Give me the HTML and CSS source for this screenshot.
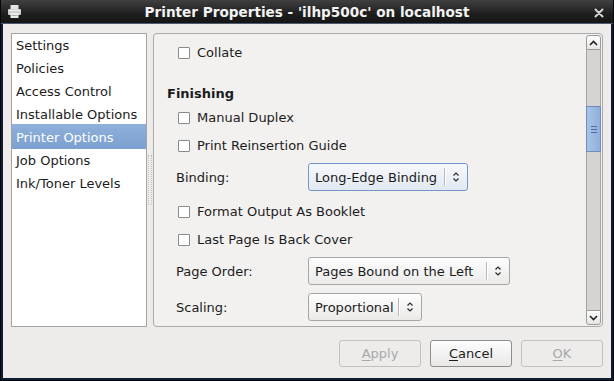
FILE: index.html
```html
<!DOCTYPE html>
<html lang="en">
<head>
    <meta charset="UTF-8">
    <title>Printer Properties - 'ilhp500c' on localhost</title>
    <link rel="stylesheet" href="styles.css">
</head>
<body>
    <div class="window">
        <div class="titlebar">
            <svg class="title-icon" width="15" height="15" viewBox="0 0 15 15">
                <rect x="3.5" y="1" width="8" height="4" fill="#e4e4e4"/>
                <rect x="1" y="5" width="13" height="6" rx="1" fill="#cfcfcf"/>
                <rect x="2" y="6" width="11" height="1" fill="#f0f0f0"/>
                <rect x="3.5" y="9" width="8" height="5" fill="#ececec"/>
                <rect x="4.5" y="11" width="6" height="1" fill="#aaa"/>
            </svg>
            <div class="title-text">Printer Properties - 'ilhp500c' on localhost</div>
            <svg class="title-close" width="10" height="10" viewBox="0 0 10 10">
                <path d="M1.5 1.5 L8.5 8.5 M8.5 1.5 L1.5 8.5" stroke="#d4d4d4" stroke-width="2" stroke-linecap="round"/>
            </svg>
        </div>

        <div class="client">
            <div class="main">
                <ul class="sidebar">
                    <li>Settings</li>
                    <li>Policies</li>
                    <li>Access Control</li>
                    <li>Installable Options</li>
                    <li class="selected">Printer Options</li>
                    <li>Job Options</li>
                    <li>Ink/Toner Levels</li>
                </ul>

                <div class="grip"></div>

                <div class="pane">
                    <div class="opts">
                        <label class="check-row"><span class="check"></span>Collate</label>

                        <div class="section-title">Finishing</div>
                        <label class="check-row"><span class="check"></span>Manual Duplex</label>
                        <label class="check-row"><span class="check"></span>Print Reinsertion Guide</label>
                        <div class="field-row">
                            <span class="field-label">Binding:</span>
                            <div class="combo combo-binding focused">
                                <span class="combo-text">Long-Edge Binding</span>
                                <span class="combo-sep"></span>
                                <svg class="combo-arrow" width="8" height="12" viewBox="0 0 8 12">
                                    <path d="M1.5 4.5 L4 2 L6.5 4.5 M1.5 7.5 L4 10 L6.5 7.5" fill="none" stroke="#2a2a2a" stroke-width="1.2"/>
                                </svg>
                            </div>
                        </div>
                        <label class="check-row"><span class="check"></span>Format Output As Booklet</label>
                        <label class="check-row"><span class="check"></span>Last Page Is Back Cover</label>
                        <div class="field-row">
                            <span class="field-label">Page Order:</span>
                            <div class="combo combo-order">
                                <span class="combo-text">Pages Bound on the Left</span>
                                <span class="combo-sep"></span>
                                <svg class="combo-arrow" width="8" height="12" viewBox="0 0 8 12">
                                    <path d="M1.5 4.5 L4 2 L6.5 4.5 M1.5 7.5 L4 10 L6.5 7.5" fill="none" stroke="#2a2a2a" stroke-width="1.2"/>
                                </svg>
                            </div>
                        </div>
                        <div class="field-row">
                            <span class="field-label">Scaling:</span>
                            <div class="combo combo-scaling">
                                <span class="combo-text">Proportional</span>
                                <span class="combo-sep"></span>
                                <svg class="combo-arrow" width="8" height="12" viewBox="0 0 8 12">
                                    <path d="M1.5 4.5 L4 2 L6.5 4.5 M1.5 7.5 L4 10 L6.5 7.5" fill="none" stroke="#2a2a2a" stroke-width="1.2"/>
                                </svg>
                            </div>
                        </div>
                    </div>

                    <div class="scrollbar">
                        <div class="scroll-btn scroll-up">
                            <svg width="9" height="6" viewBox="0 0 9 6">
                                <path d="M1 5 L4.5 1.5 L8 5" fill="none" stroke="#222" stroke-width="1.6"/>
                            </svg>
                        </div>
                        <div class="trough">
                            <div class="thumb">
                                <span></span><span></span><span></span>
                            </div>
                        </div>
                        <div class="scroll-btn scroll-down">
                            <svg width="9" height="6" viewBox="0 0 9 6">
                                <path d="M1 1 L4.5 4.5 L8 1" fill="none" stroke="#222" stroke-width="1.6"/>
                            </svg>
                        </div>
                    </div>
                </div>
            </div>

            <div class="buttons">
                <button class="btn" disabled><u>A</u>pply</button>
                <button class="btn"><u>C</u>ancel</button>
                <button class="btn" disabled><u>O</u>K</button>
            </div>
        </div>
    </div>
</body>
</html>
```

FILE: styles.css
```css
* {
    margin: 0;
    padding: 0;
    box-sizing: border-box;
    font-family: 'DejaVu Sans', 'Liberation Sans', sans-serif;
}

body {
    width: 614px;
    height: 381px;
    overflow: hidden;
    background: #000;
}

.window {
    width: 614px;
    height: 381px;
    display: flex;
    flex-direction: column;
    background: #0f1b30;
    border: 1px solid #05070c;
    border-top: none;
}

.titlebar {
    height: 24px;
    display: flex;
    align-items: center;
    padding: 0 9px 0 6px;
    background: linear-gradient(#404040, #1e1e1e 60%, #151515);
    border-bottom: 1px solid #4c5b72;
    flex-shrink: 0;
}

.title-icon {
    display: block;
}

.title-text {
    flex: 1;
    text-align: center;
    color: #f2f2f2;
    font-size: 13.6px;
    font-weight: bold;
    padding-right: 2px;
}

.title-close {
    display: block;
    margin-top: 2px;
}

.client {
    flex: 1;
    margin: 0 2px 2px 2px;
    background: #edeceb;
    padding: 9px 8px 0 8px;
    display: flex;
    flex-direction: column;
}

.main {
    height: 294px;
    display: flex;
    align-items: stretch;
}

/* left list */
.sidebar {
    list-style: none;
    width: 136px;
    background: #fff;
    border: 1px solid #a3a3a3;
}

.sidebar li {
    height: 23px;
    line-height: 23px;
    padding-left: 4px;
    font-size: 13px;
    color: #1c1c1c;
    white-space: nowrap;
}

.sidebar li.selected {
    height: 25px;
    line-height: 23px;
    margin-top: -2px;
    padding-top: 2px;
    background: linear-gradient(#8fb0dc, #7b9fcf);
    color: #fff;
}

.grip {
    align-self: center;
    width: 6px;
    height: 50px;
    border-left: 1px dotted #b9b8b6;
    border-right: 1px dotted #b9b8b6;
    transform: scaleX(0.6);
}

/* right scrolled pane */
.pane {
    flex: 1;
    display: flex;
    background: #f2f1f0;
    border: 1px solid #a9a9a9;
    border-radius: 4px;
}

.opts {
    flex: 1;
    display: flex;
    flex-direction: column;
    padding: 6px 0 0 13px;
    font-size: 13px;
    color: #1c1c1c;
}

.check-row {
    height: 24px;
    display: flex;
    align-items: center;
    gap: 7px;
    padding-left: 11px;
    padding-top: 1px;
}

.check {
    width: 12px;
    height: 12px;
    background: #fff;
    border: 1px solid #8a8a8a;
    border-radius: 1px;
}

.section-title {
    margin-top: 20px;
    height: 20px;
    line-height: 20px;
    font-weight: bold;
}

.field-row {
    height: 28px;
    display: flex;
    align-items: center;
    padding-left: 9px;
}

.section-title + .check-row {
    margin-top: 1px;
}

.check-row + .check-row {
    margin-top: 4px;
}

.check-row + .field-row {
    margin-top: 6px;
}

.field-row + .check-row,
.field-row + .field-row {
    margin-top: 8px;
}

.field-label {
    width: 132px;
}

.combo {
    height: 28px;
    display: flex;
    align-items: center;
    padding-left: 6px;
    border: 1px solid #a6a6a6;
    border-radius: 3px;
    background: linear-gradient(#fdfdfd, #ebeae9);
}

.combo.focused {
    border-color: #7497c9;
    background: linear-gradient(#f6f8fb, #e2e8f1);
}

.combo-binding { width: 160px; }
.combo-order { width: 202px; }
.combo-scaling { width: 114px; }

.combo-text {
    flex: 1;
    white-space: nowrap;
}

.combo-sep {
    width: 1px;
    height: 18px;
    background: #b9b9b9;
    box-shadow: 1px 0 #fff;
}

.combo-arrow {
    display: block;
    margin: 0 7px 0 7px;
}

/* scrollbar */
.scrollbar {
    width: 15px;
    margin: 1px 1px 1px 0;
    display: flex;
    flex-direction: column;
}

.scroll-btn {
    height: 15px;
    display: flex;
    align-items: center;
    justify-content: center;
    background: linear-gradient(#fefefe, #e6e5e4);
    border: 1px solid #9a9a9a;
}

.scroll-up {
    border-radius: 3px 3px 0 0;
}

.scroll-down {
    border-radius: 0 0 3px 3px;
}

.trough {
    flex: 1;
    background: #d5d4d3;
    border-left: 1px solid #a5a5a5;
    border-right: 1px solid #a5a5a5;
    padding-top: 56px;
}

.thumb {
    height: 46px;
    margin: 0 -1px;
    background: linear-gradient(90deg, #a9c3e6, #8fb0dc);
    border: 1px solid #6e8ec0;
    display: flex;
    flex-direction: column;
    align-items: center;
    justify-content: center;
    gap: 2px;
}

.thumb span {
    width: 6px;
    height: 1px;
    background: #4d6d9e;
}

/* dialog buttons */
.buttons {
    display: flex;
    justify-content: flex-end;
    gap: 9px;
    margin-top: 13px;
}

.btn {
    width: 82px;
    height: 27px;
    font-size: 13px;
    color: #1c1c1c;
    background: linear-gradient(#fdfdfd, #e9e8e7);
    border: 1px solid #8e8e8e;
    border-radius: 3px;
}

.btn:disabled {
    color: #a9a8a7;
    background: #edeceb;
    border-color: #c3c2c1;
}

.btn u {
    text-underline-offset: 2px;
}
```
